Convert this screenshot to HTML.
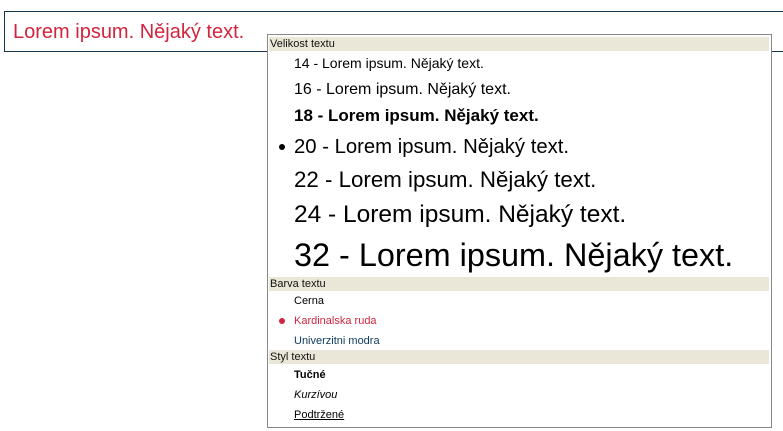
<!DOCTYPE html>
<html><head><meta charset="utf-8"><style>
body{margin:0;width:783px;height:431px;background:#fff;position:relative;overflow:hidden;font-family:"Liberation Sans","DejaVu Sans",sans-serif}
.box{position:absolute;left:4px;top:11px;width:784px;height:41px;border:1px solid #14364f;box-sizing:border-box}
.box span{position:absolute;left:8px;top:9px;font-size:20px;color:#d3243d;white-space:nowrap}
.menu{position:absolute;left:267px;top:34px;width:505px;height:394px;border:1px solid #888;box-sizing:border-box;background:#fff}
.h{position:absolute;left:1px;width:500px;height:14px;background:#ebe7d8;font-size:11px;line-height:14px;color:#111;padding-left:1px;box-sizing:border-box}
.i{position:absolute;left:26px;white-space:nowrap;color:#000;line-height:1}
.dot{position:absolute;left:11px;width:6px;height:6px;border-radius:50%}
</style></head><body>
<div class="box"><span>Lorem ipsum. Nějaký text.</span></div>
<div class="menu">
<div class="h" style="top:2px">Velikost textu</div>
<div class="i" style="top:21px;font-size:14px">14 - Lorem ipsum. Nějaký text.</div>
<div class="i" style="top:47px;font-size:16px">16 - Lorem ipsum. Nějaký text.</div>
<div class="i" style="top:72px;font-size:17px;font-weight:bold">18 - Lorem ipsum. Nějaký text.</div>
<div class="dot" style="top:109px;background:#000"></div>
<div class="i" style="top:102px;font-size:20.3px">20 - Lorem ipsum. Nějaký text.</div>
<div class="i" style="top:134px;font-size:22.3px">22 - Lorem ipsum. Nějaký text.</div>
<div class="i" style="top:168px;font-size:24.5px">24 - Lorem ipsum. Nějaký text.</div>
<div class="i" style="top:204px;font-size:32.4px">32 - Lorem ipsum. Nějaký text.</div>
<div class="h" style="top:242px">Barva textu</div>
<div class="i" style="top:261px;font-size:11px">Cerna</div>
<div class="dot" style="top:283px;background:#d3243d"></div>
<div class="i" style="top:281px;font-size:11px;color:#d3243d">Kardinalska ruda</div>
<div class="i" style="top:301px;font-size:11px;color:#0b3a5e">Univerzitni modra</div>
<div class="h" style="top:315px">Styl textu</div>
<div class="i" style="top:335px;font-size:11px;font-weight:bold">Tučné</div>
<div class="i" style="top:355px;font-size:11px;font-style:italic">Kurzívou</div>
<div class="i" style="top:375px;font-size:11px;text-decoration:underline">Podtržené</div>
</div>
</body></html>
